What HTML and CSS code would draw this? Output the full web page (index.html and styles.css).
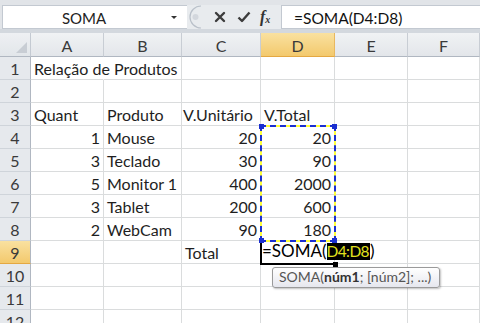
FILE: index.html
```html
<!DOCTYPE html>
<html lang="pt">
<head>
<meta charset="utf-8">
<title>SOMA</title>
<link rel="stylesheet" href="styles.css">
</head>
<body>
<div class="app">
  <div class="fbar">
    <div class="namebox">
      <span class="name">SOMA</span>
      <span class="drop"></span>
    </div>
    <div class="btns">
      <svg class="knob" width="16" height="24" viewBox="0 0 16 24">
        <path d="M15 1 A11 11 0 0 0 15 23" fill="none" stroke="#b9c0c9" stroke-width="1.2"/>
        <circle cx="9.5" cy="12" r="3" fill="#d3d7dd"/>
      </svg>
      <svg class="ico x" width="12" height="12" viewBox="0 0 12 12">
        <path d="M2 2 L10 10 M10 2 L2 10" stroke="#3c3c3c" stroke-width="2.4" stroke-linecap="round"/>
      </svg>
      <svg class="ico ok" width="14" height="12" viewBox="0 0 14 12">
        <path d="M1.5 6.5 L5 10 L12.5 1.5" fill="none" stroke="#3c3c3c" stroke-width="2.4" stroke-linejoin="round"/>
      </svg>
      <span class="fx">f<sub>x</sub></span>
    </div>
    <div class="finput">=SOMA(D4:D8)</div>
  </div>
  <div class="sep"></div>
  <div class="sheet">
    <div class="grid">
      <div class="corner"><span class="tri"></span></div>
      <div class="ch">A</div><div class="ch">B</div><div class="ch">C</div><div class="ch sel">D</div><div class="ch">E</div><div class="ch last">F</div>

      <div class="rh">1</div><div class="c ov">Relação de Produtos</div><div class="c"></div><div class="c"></div><div class="c"></div><div class="c"></div><div class="c"></div>
      <div class="rh">2</div><div class="c"></div><div class="c"></div><div class="c"></div><div class="c"></div><div class="c"></div><div class="c"></div>
      <div class="rh">3</div><div class="c">Quant</div><div class="c">Produto</div><div class="c tight">V.Unitário</div><div class="c">V.Total</div><div class="c"></div><div class="c"></div>
      <div class="rh">4</div><div class="c n">1</div><div class="c">Mouse</div><div class="c n">20</div><div class="c n">20</div><div class="c"></div><div class="c"></div>
      <div class="rh">5</div><div class="c n">3</div><div class="c">Teclado</div><div class="c n">30</div><div class="c n">90</div><div class="c"></div><div class="c"></div>
      <div class="rh">6</div><div class="c n">5</div><div class="c">Monitor 1</div><div class="c n">400</div><div class="c n">2000</div><div class="c"></div><div class="c"></div>
      <div class="rh">7</div><div class="c n">3</div><div class="c">Tablet</div><div class="c n">200</div><div class="c n">600</div><div class="c"></div><div class="c"></div>
      <div class="rh">8</div><div class="c n">2</div><div class="c">WebCam</div><div class="c n">90</div><div class="c n">180</div><div class="c"></div><div class="c"></div>
      <div class="rh sel">9</div><div class="c"></div><div class="c"></div><div class="c">Total</div><div class="c"></div><div class="c"></div><div class="c"></div>
      <div class="rh">10</div><div class="c"></div><div class="c"></div><div class="c"></div><div class="c"></div><div class="c"></div><div class="c"></div>
      <div class="rh">11</div><div class="c"></div><div class="c"></div><div class="c"></div><div class="c"></div><div class="c"></div><div class="c"></div>
      <div class="rh">12</div><div class="c"></div><div class="c"></div><div class="c"></div><div class="c"></div><div class="c"></div><div class="c"></div>
    </div>
    <div class="range">
      <span class="h tl"></span><span class="h tr"></span><span class="h bl"></span><span class="h br"></span>
    </div>
    <div class="edit">=SOMA(<span class="hl">D4:D8</span>)<span class="fill"></span></div>
    <div class="tip">SOMA(<b>núm1</b>; [núm2]; ...)</div>
  </div>
</div>
</body>
</html>
```

FILE: styles.css
```css
* { box-sizing: border-box; }
html, body { margin: 0; padding: 0; background: #fff; }
body { width: 480px; height: 323px; overflow: hidden; font-family: Lato, "Noto Sans", sans-serif; color: #1e1e1e; }
.app { width: 480px; }

.fbar {
  display: flex;
  height: 29px;
  padding-top: 5px;
  background: #e1e4e8;
}
.namebox {
  width: 185px;
  margin-left: 2px;
  background: #fff;
  border: 1px solid #c3c9d1;
  border-right: none;
  position: relative;
  display: flex;
  align-items: center;
  justify-content: center;
  font-size: 15px;
  padding-right: 22px;
  padding-top: 1px;
}
.name { color: #222; }
.drop {
  position: absolute;
  right: 10px;
  top: 10px;
  width: 0; height: 0;
  border-left: 3px solid transparent;
  border-right: 3px solid transparent;
  border-top: 3px solid #333;
}
.btns {
  width: 94px;
  display: flex;
  align-items: center;
  background: #e8ebee;
}
.knob { margin-left: -1px; }
.ico.x { margin-left: 12px; }
.ico.ok { margin-left: 11px; }
.fx {
  margin-left: 9px;
  font-family: "Liberation Serif", serif;
  font-style: italic;
  font-weight: bold;
  font-size: 16px;
  color: #333;
  line-height: 1;
}
.fx sub { font-size: 10px; vertical-align: -1px; }
.finput {
  flex: 1;
  background: #fff;
  border: 1px solid #c3c9d1;
  border-right: none;
  padding-left: 12px;
  font-size: 15.5px;
  display: flex;
  align-items: center;
  padding-top: 1px;
  color: #111;
}
.sep { height: 4px; background: #d3d8de; }

.sheet { position: relative; }
.grid {
  display: grid;
  grid-template-columns: 31px 73px 78px 79px 74px 73px 72px;
  grid-template-rows: 24px repeat(12, 23px);
  font-size: 16px;
}
.corner {
  background: linear-gradient(#eef0f3, #e2e6ea);
  border-right: 1px solid #c4cad2;
  border-bottom: 1px solid #b0b7c1;
  position: relative;
}
.tri {
  position: absolute;
  right: 3px; bottom: 3px;
  width: 0; height: 0;
  border-left: 11px solid transparent;
  border-bottom: 11px solid #c8cdd4;
}
.ch {
  background: linear-gradient(#f0f2f4, #e3e6ea);
  border-right: 1px solid #c8cdd4;
  border-bottom: 1px solid #b0b7c1;
  display: flex;
  align-items: center;
  justify-content: center;
  color: #3a3a3a;
  padding-top: 2px;
}
.ch.sel {
  background: linear-gradient(#f9e1a0, #f3c96d);
  border-bottom: 1px solid #e4a842;
  border-right-color: #e8b860;
}
.rh {
  background: #e6e9ed;
  border-right: 1px solid #b0b7c1;
  border-bottom: 1px solid #cfd4da;
  display: flex;
  align-items: flex-end;
  justify-content: center;
  line-height: 20px;
  color: #3a3a3a;
}
.rh.sel {
  background: linear-gradient(#f9e1a0, #f3c96d);
  border-bottom-color: #e4a842;
}
.c {
  border-right: 1px solid #dadcdd;
  border-bottom: 1px solid #dadcdd;
  display: flex;
  align-items: flex-end;
  padding: 0 3px 0 3px;
  line-height: 20px;
  white-space: nowrap;
  overflow: visible;
  color: #1e1e1e;
}
.c.tight { padding-left: 1px; }
.c.n { justify-content: flex-end; padding-right: 3px; }
.c.ov { position: relative; z-index: 1; border-right-color: transparent; }

.range {
  position: absolute;
  left: 260px; top: 92px;
  width: 76px; height: 117px;
  border: 2px solid #ffff3c;
}
.range::after {
  content: "";
  position: absolute;
  inset: -2px;
  border: 2px dashed #1a2fd0;
}
.h {
  position: absolute;
  width: 5px; height: 5px;
  background: #1a2fd0;
  z-index: 2;
}
.tl { left: -3px; top: -3px; }
.tr { right: -3px; top: -3px; }
.bl { left: -3px; bottom: -3px; }
.br { right: -3px; bottom: -3px; }

.edit {
  position: absolute;
  left: 260px; top: 208px;
  width: 76px; height: 24px;
  border-left: 2px solid #000;
  border-bottom: 2px solid #000;
  white-space: nowrap;
  font-size: 17px;
  line-height: 17px;
  padding-top: 1px;
  color: #000;
}
.hl {
  background: #000;
  color: #e2e21e;
  display: inline-block;
  height: 17px;
  font-size: 15.5px;
  letter-spacing: -0.6px;
  padding-right: 1px;
}
.fill {
  position: absolute;
  right: -2px; bottom: -4px;
  width: 5px; height: 5px;
  background: #000;
}

.tip {
  position: absolute;
  left: 272px; top: 234px;
  width: 168px; height: 21px;
  border: 1px solid #9a9a9a;
  border-radius: 3px;
  background: linear-gradient(#ffffff, #e6e7ee);
  box-shadow: 1px 1px 2px rgba(0,0,0,0.25);
  font-size: 14px;
  line-height: 16px;
  color: #555;
  padding: 1px 0 0 6px;
  white-space: nowrap;
}
.tip b { color: #333; }
```
